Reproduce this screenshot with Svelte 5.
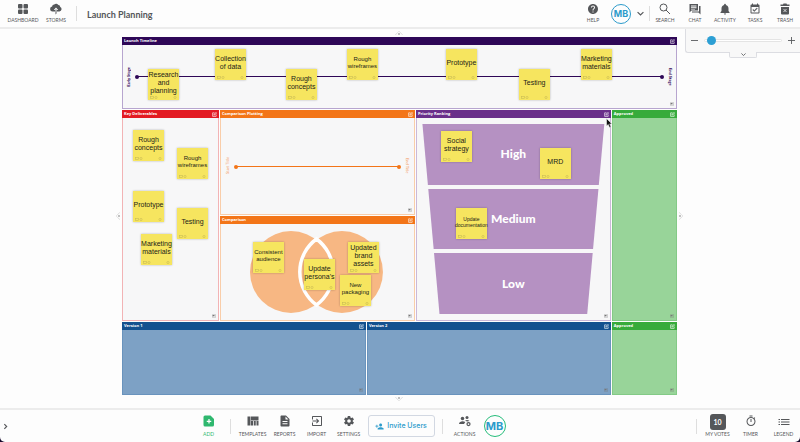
<script>
  const icons = {
    dashboard: '<rect x="2" y="2" width="9" height="9" rx="2"/><rect x="13" y="2" width="9" height="9" rx="2"/><rect x="2" y="13" width="9" height="9" rx="2"/><rect x="13" y="13" width="9" height="9" rx="2"/>',
    storms: '<path d="M10 17H5a5 5 0 0 1-.8-9.9A4.500 4.500 0 0 1 8.500 3a5 5 0 0 1 8.300 1.200A4.200 4.200 0 0 1 20.500 8 4.800 4.800 0 0 1 19 17h-5v-3h2.500L12 9l-4.500 5H10z"/><path d="M11 13h2v8l-2 2z"/>',
    help: '<path d="M12 2C6.480 2 2 6.480 2 12s4.480 10 10 10 10-4.480 10-10S17.520 2 12 2zm1 17h-2v-2h2v2zm2.070-7.750l-.9.92C13.450 12.900 13 13.500 13 15h-2v-.5c0-1.100.45-2.100 1.170-2.830l1.240-1.260c.37-.36.59-.86.59-1.410 0-1.100-.9-2-2-2s-2 .9-2 2H8c0-2.210 1.790-4 4-4s4 1.790 4 4c0 .88-.36 1.680-.93 2.250z"/>',
    search: '<g fill="none" stroke="currentColor" stroke-width="2"><circle cx="9" cy="9" r="7"/><path d="M14 14l8 8"/></g>',
    chat: '<path d="M1 2h17v13H5l-4 4zM4 5v2h11V5zm0 3.500v2h11v-2zM4 12v1h8v-1z" fill-rule="evenodd"/><path d="M20 6h3v17l-4-4H6v-2h14z"/>',
    activity: '<path d="M12 23c1.300 0 2.200-.9 2.200-2H9.800c0 1.100.9 2 2.200 2zm7-7v-5c0-3.500-1.900-6.100-5.200-6.800V3.500a1.800 1.800 0 0 0-3.600 0v.7C6.900 4.900 5 7.500 5 11v5l-2 2.500V20h18v-1.500z"/>',
    tasks: '<path d="M16.530 11.060L15.470 10l-4.880 4.880-2.120-2.120-1.060 1.060L10.590 17l5.940-5.940z" stroke="currentColor"/><path d="M19 3h-1V1h-2v2H8V1H6v2H5c-1.110 0-2 .9-2 2v14c0 1.100.89 2 2 2h14c1.100 0 2-.9 2-2V5c0-1.100-.9-2-2-2zm0 16H5V8h14v11z"/>',
    trash: '<path d="M3 3h5l1-2h6l1 2h5v3H3z"/><path d="M4 8h16v13a2 2 0 0 1-2 2H6a2 2 0 0 1-2-2z"/><path d="M9 12l6 6M15 12l-6 6" stroke="#fff" stroke-width="1.500"/>',
    add: '<path d="M4 1h11l7 7v12a3 3 0 0 1-3 3H4a3 3 0 0 1-3-3V4a3 3 0 0 1 3-3z"/><path d="M12 8v9M7.500 12.500h9" stroke="#fff" stroke-width="2.500"/>',
    templates: '<path d="M1 3h6v18H1zM8 3h15v8H8zM8 12h4v9H8zM13.500 12h4v9h-4zM19 12h4v9h-4z"/>',
    reports: '<path d="M14 1H5c-1.100 0-2 .9-2 2v18c0 1.100.89 2 2 2h14c1.100 0 2-.9 2-2V8l-7-7zm3 17.500H7v-2h10v2zm0-4.500H7v-2h10v2zm-4-5V3l6 6z"/>',
    import: '<path d="M10.090 15.590L11.500 17l5-5-5-5-1.410 1.410L12.670 11H3v2h9.670l-2.580 2.590zM20 2H4c-1.110 0-2 .9-2 2v5h2V4h16v16H4v-5H2v5c0 1.100.89 2 2 2h16c1.100 0 2-.9 2-2V4c0-1.100-.9-2-2-2z"/>',
    settings: '<path d="M19.430 12.980c.04-.32.07-.64.07-.98s-.03-.66-.07-.98l2.110-1.650c.19-.15.24-.42.12-.64l-2-3.460c-.12-.22-.39-.3-.61-.22l-2.490 1c-.52-.4-1.080-.73-1.690-.98l-.38-2.650C14.460 2.180 14.250 2 14 2h-4c-.25 0-.46.18-.49.42l-.38 2.650c-.61.25-1.170.59-1.690.98l-2.490-1c-.23-.09-.49 0-.61.22l-2 3.460c-.13.22-.07.49.12.64l2.110 1.650c-.04.32-.07.65-.07.98s.03.66.07.98l-2.110 1.650c-.19.15-.24.42-.12.64l2 3.460c.12.22.39.3.61.22l2.490-1c.52.4 1.080.73 1.690.98l.38 2.650c.03.24.24.42.49.42h4c.25 0 .46-.18.49-.42l.38-2.650c.61-.25 1.170-.59 1.690-.98l2.490 1c.23.09.49 0 .61-.22l2-3.460c.12-.22.07-.49-.12-.64l-2.110-1.650zM12 15.500c-1.930 0-3.500-1.570-3.500-3.500s1.570-3.500 3.500-3.500 3.500 1.570 3.500 3.500-1.570 3.500-3.500 3.500z"/>',
    invite: '<path d="M15 12c2.210 0 4-1.790 4-4s-1.790-4-4-4-4 1.790-4 4 1.790 4 4 4zm-9-2V7H4v3H1v2h3v3h2v-3h3v-2H6zm9 4c-2.670 0-8 1.340-8 4v2h16v-2c0-2.660-5.330-4-8-4z"/>',
    actions: '<circle cx="7" cy="7" r="3.500"/><circle cx="16" cy="5" r="3"/><path d="M0 18c0-4 4-5.500 7-5.500 2 0 4 .5 5.500 1.500L10 18zM12 11c3-2 7-1.500 9 1l-5 1z"/><circle cx="19" cy="18" r="3" fill="none" stroke="currentColor" stroke-width="2.500"/>',
    timer: '<path d="M15 1H9v2h6V1zm-4 13h2V8h-2v6zm8.030-6.610l1.420-1.420c-.43-.51-.9-.99-1.410-1.410l-1.420 1.420C16.070 4.740 14.120 4 12 4c-4.970 0-9 4.030-9 9s4.020 9 9 9 9-4.030 9-9c0-2.120-.74-4.070-1.970-5.610zM12 20c-3.870 0-7-3.130-7-7s3.130-7 7-7 7 3.130 7 7-3.130 7-7 7z"/>',
    legend: '<path d="M1 8h3v2H1zM6 8h17v2H6zM1 13h3v2H1zM6 13h17v2H6zM1 18h3v2H1zM6 18h17v2H6z"/>',
    edit: '<path d="M12 4H3v17h17v-9M9 15l1-4 9-9 3 3-9 9z" fill="none" stroke="currentColor" stroke-width="3"/>',
    corner: '<path d="M2 4h20v16H2z" fill="none" stroke="currentColor" stroke-width="2"/><path d="M4 6h11v8H4z"/>',
    down: '<path d="M2 7l10 10L22 7" fill="none" stroke="currentColor" stroke-width="4"/>',
    right: '<path d="M8 4l8 8-8 8" fill="none" stroke="currentColor" stroke-width="4"/>',
    grow: '<path d="M1 18L12 6l11 12" fill="none" stroke="#bbb" stroke-width="2" stroke-dasharray="3 2"/><circle cx="12" cy="15" r="2.500" fill="#777"/>'
  };

  const rightTools = [['search', 'SEARCH'], ['chat', 'CHAT'], ['activity', 'ACTIVITY'], ['tasks', 'TASKS'], ['trash', 'TRASH']];
  const boardTools = [['templates', 'TEMPLATES'], ['reports', 'REPORTS'], ['import', 'IMPORT'], ['settings', 'SETTINGS']];

  // Each note: x and y inside its panel body, text size, lines of text.
  const notes = {
    timeline: [
      [25, 24, 7, ['Research', 'and', 'planning']],
      [92, 4, 7, ['Collection', 'of data']],
      [163, 24, 7, ['Rough', 'concepts']],
      [224, 4, 6, ['Rough', 'wireframes']],
      [323, 4, 7, ['Prototype']],
      [396, 24, 7, ['Testing']],
      [458, 4, 7, ['Marketing', 'materials']]
    ],
    deliverables: [
      [10, 12, 7, ['Rough', 'concepts']],
      [54, 30, 6, ['Rough', 'wireframes']],
      [10, 73, 7, ['Prototype']],
      [54, 90, 7, ['Testing']],
      [18, 116, 7, ['Marketing', 'materials']]
    ],
    comparison: [
      [32, 18, 6, ['Consistent', 'audience']],
      [83, 35, 7, ['Update', "persona's"]],
      [127, 18, 7, ['Updated', 'brand', 'assets']],
      [119, 51, 6, ['New', 'packaging']]
    ],
    priority: [
      [24, 13, 7, ['Social', 'strategy']],
      [123, 30, 7, ['MRD']],
      [39, 90, 5, ['Update', 'documentation']]
    ],
    none: []
  };

  let zoom = $state(3);
</script>

{#snippet icon(name, cls = '')}
  <svg class="icon {cls}" viewBox="0 0 24 24" fill="currentColor" aria-hidden="true">{@html icons[name]}</svg>
{/snippet}

{#snippet tool(name, label, cls = '')}
  <button class="tool {cls}" type="button">{@render icon(name)}<span>{label}</span></button>
{/snippet}

{#snippet panel(title, cls, list, width, height, inner)}
  <section class="panel {cls}">
    <header><h2>{title}</h2><button class="edit" type="button" aria-label="Edit section">{@render icon('edit')}</button></header>
    <div class="body">
      {#if inner}{@render inner()}{/if}
      {#each list as [x, y, size, lines]}
        <article class="note s{size}" style="left:{(x / width) * 100}%;top:{(y / height) * 100}%">
          <p>{#each lines as line}<span>{line}</span>{/each}</p>
          <svg class="marks" viewBox="0 0 27 3" fill="none" stroke="currentColor" stroke-width="0.6" aria-hidden="true">
            <rect x="0.5" y="0.5" width="3" height="2" /><circle cx="6" cy="1.5" r="1.100" /><circle cx="25" cy="1.5" r="1.100" />
          </svg>
        </article>
      {/each}
      {@render icon('corner', 'corner')}
    </div>
  </section>
{/snippet}

{#snippet timelineAxis()}
  <div class="axis"><span class="up">Early Stage</span><i></i><span>End Stage</span></div>
{/snippet}

{#snippet plotAxis()}
  <div class="axis plot"><span class="up">Start Title</span><i></i><span>End Title</span></div>
{/snippet}

{#snippet venn()}
  <svg class="venn" viewBox="0 0 193 96" aria-hidden="true">
    <circle cx="70" cy="48" r="41" fill="#f7b783" /><circle cx="121" cy="48" r="41" fill="#f7b783" />
    <path d="M95.500 15a41 41 0 0 1 0 66a41 41 0 0 1 0-66z" fill="#f7b783" stroke="#fff" stroke-width="3.500" />
  </svg>
{/snippet}

{#snippet funnel()}
  <div class="funnel"><div>High</div><div>Medium</div><div>Low</div></div>
{/snippet}

<div class="app">
  <header class="topbar">
    <nav class="left">
      {@render tool('dashboard', 'DASHBOARD', 'wide')}
      {@render tool('storms', 'STORMS', 'narrow')}
    </nav>
    <span class="rule"></span>
    <h1>Launch Planning</h1>
    {@render tool('help', 'HELP', 'push')}
    <button class="avatar" type="button">MB</button>
    <button class="bare" type="button" aria-label="Account menu">{@render icon('down', 'chev')}</button>
    <span class="rule"></span>
    <nav>{#each rightTools as [name, label]}{@render tool(name, label)}{/each}</nav>
  </header>

  <main>
    <div class="board">
      {@render panel('Launch Timeline', 'violet', notes.timeline, 553, 63, timelineAxis)}
      <div class="middle">
        {@render panel('Key Deliverables', 'red', notes.deliverables, 95, 202, null)}
        <div class="stack">
          {@render panel('Comparison Plotting', 'orange', notes.none, 193, 96, plotAxis)}
          {@render panel('Comparison', 'orange', notes.comparison, 193, 96, venn)}
        </div>
        {@render panel('Priority Ranking', 'purple', notes.priority, 193, 202, funnel)}
        {@render panel('Approved', 'green', notes.none, 63, 202, null)}
      </div>
      <div class="bottom">
        {@render panel('Version 1', 'blue', notes.none, 242, 64, null)}
        {@render panel('Version 2', 'blue', notes.none, 242, 64, null)}
        {@render panel('Approved', 'green', notes.none, 63, 64, null)}
      </div>
      <button class="grow n" type="button" aria-label="Extend up">{@render icon('grow')}</button>
      <button class="grow e" type="button" aria-label="Extend right">{@render icon('grow')}</button>
      <button class="grow s" type="button" aria-label="Extend down">{@render icon('grow')}</button>
      <button class="grow w" type="button" aria-label="Extend left">{@render icon('grow')}</button>
      <svg class="pointer" viewBox="0 0 12 20" aria-hidden="true"><path d="M1 1v15l3.500-3.200L7 19l3-1.200-2.600-6H12z" fill="#111" stroke="#fff" /></svg>
    </div>

    <div class="zoom">
      <button class="bare" type="button" aria-label="Zoom out"><svg class="sign" viewBox="0 0 8 8"><path d="M0 4h8" stroke="currentColor" /></svg></button>
      <input type="range" min="0" max="100" bind:value={zoom} aria-label="Zoom" />
      <button class="bare" type="button" aria-label="Zoom in"><svg class="sign" viewBox="0 0 8 8"><path d="M0 4h8M4 0v8" stroke="currentColor" /></svg></button>
      <button class="tab" type="button" aria-label="Expand zoom panel">{@render icon('down')}</button>
    </div>
  </main>

  <footer>
    <button class="bare more" type="button" aria-label="Open side panel">{@render icon('right', 'chev')}</button>
    <div class="tools">
      {@render tool('add', 'ADD', 'accent')}
      <span class="rule"></span>
      {#each boardTools as [name, label]}{@render tool(name, label)}{/each}
      <button class="invite" type="button">{@render icon('invite')}Invite Users</button>
      <span class="rule"></span>
      {@render tool('actions', 'ACTIONS')}
      <button class="avatar big" type="button">MB</button>
    </div>
    <span class="rule end"></span>
    <button class="tool" type="button"><b class="votes">10</b><span>MY VOTES</span></button>
    {@render tool('timer', 'TIMER')}
    {@render tool('legend', 'LEGEND')}
  </footer>
</div>

<style>
  :global(body) { background: #170a2c; }
  * { box-sizing: border-box; }
  h1, h2, p { margin: 0; }
  button { margin: 0; padding: 0; border: 0; background: none; color: inherit; font: inherit; cursor: pointer; }
  .app { display: flex; flex-direction: column; min-height: 100vh; background: #fdfdfd; color: #55575a; font-family: Lato, "Open Sans", sans-serif; border-radius: 0 0 5px 5px; overflow: hidden; }
  .icon { display: block; width: 12px; height: 12px; }

  .topbar { display: flex; align-items: center; height: 29px; border-bottom: 2px solid #ececec; }
  nav { display: flex; }
  .left { padding-left: 8px; gap: 8px; }
  .tool { display: flex; flex-direction: column; align-items: center; width: 30px; flex: none; gap: 1px; font-size: 5px; line-height: 8px; white-space: nowrap; }
  .tool span { display: block; }
  .wide { width: 30px; }
  .narrow { width: 20px; }
  .push { margin-left: auto; }
  .rule { width: 1px; height: 15px; background: #dedede; flex: none; }
  .left + .rule { margin: 0 10px; }
  h1 { font-size: 9px; line-height: 12px; font-weight: 700; padding-top: 3px; }
  .avatar { width: 20px; height: 20px; margin-left: 3px; border: 1px solid #2c9bcb; border-radius: 50%; color: #2c9bcb; font-family: Inter, sans-serif; font-size: 9px; line-height: 10px; font-weight: 700; text-align: center; flex: none; }
  .bare { display: grid; place-items: center; }
  .chev { width: 7px; height: 7px; }
  .topbar .bare { margin: 0 5px 0 6px; }

  main { position: relative; flex: 1; display: flex; padding: 8px 15.4% 13px 15.25%; }
  .board { position: relative; flex: 1; display: grid; grid-template-rows: 72fr 211fr 73fr; gap: 1px; }
  .middle { display: grid; grid-template-columns: 97fr 195fr 195fr 65fr; gap: 1px; }
  .stack { display: grid; grid-template-rows: 1fr 1fr; gap: 1px; }
  .bottom { display: grid; grid-template-columns: 244fr 244fr 65fr; gap: 1px; }

  .panel { --main: #2e0757; --edge: #b7a5cf; --fill: #f7f7f8; display: flex; flex-direction: column; min-width: 0; background: var(--main); }
  .red { --main: #e31b23; --edge: #f2b3b5; }
  .orange { --main: #f37518; --edge: #f9cda9; }
  .purple { --main: #6a2f8a; --edge: #cbb8d8; }
  .green { --main: #37ab3b; --edge: #83ca86; --fill: #98d499; }
  .blue { --main: #13518f; --edge: #6993bd; --fill: #7da1c5; }
  .panel header { display: flex; align-items: center; justify-content: space-between; height: 8px; padding: 0 2px; color: #fff; }
  h2 { font-family: "Open Sans", sans-serif; font-size: 4px; line-height: 8px; font-weight: 700; }
  .edit .icon { width: 5px; height: 5px; }
  .body { position: relative; flex: 1; border: 1px solid var(--edge); border-top: 0; background: var(--fill); }
  .corner { position: absolute; right: 2px; bottom: 2px; width: 4px; height: 4px; color: #777; }

  .note { position: absolute; display: flex; flex-direction: column; width: 31px; height: 31px; background: #f6e55f; box-shadow: 0 0 2px #0004; color: #222218; font-family: "Liberation Sans", Arial, sans-serif; text-align: center; }
  .note p { flex: 1; display: flex; flex-direction: column; align-items: center; justify-content: center; white-space: nowrap; }
  .marks { width: 27px; height: 3px; margin: 0 2px 1px; color: #c9bb55; }
  .s7 { font-size: 7px; line-height: 8px; }
  .s6 { font-size: 6px; line-height: 7px; }
  .s5 { font-size: 5px; line-height: 6px; }

  .axis { display: flex; align-items: center; height: 100%; padding: 0 3px; color: var(--main); font-size: 4px; line-height: 6px; font-weight: 900; }
  .axis span { writing-mode: vertical-rl; }
  .axis .up { transform: rotate(180deg); }
  .axis i { position: relative; flex: 1; height: 1px; margin: 0 4px; background: var(--main); }
  .axis i::before, .axis i::after { content: ""; position: absolute; top: -1px; width: 4px; height: 4px; border-radius: 50%; background: var(--main); }
  .axis i::before { left: -1px; }
  .axis i::after { right: -1px; }
  .plot { padding: 0 4px; font-weight: 400; }
  .plot span { opacity: 0.7; }

  .venn { position: absolute; inset: 0; width: 100%; height: 100%; }
  .funnel { display: flex; flex-direction: column; gap: 4px; height: 100%; padding: 6px 5px; color: #fff; font-size: 12px; line-height: 14px; font-weight: 900; clip-path: polygon(5px 0, calc(100% - 5px) 0, 88% 100%, 12% 100%); }
  .funnel div { flex: 1; display: grid; place-items: center; background: #b591c2; }

  .grow { position: absolute; }
  .grow .icon { width: 8px; height: 8px; }
  .n { left: 50%; top: -8px; margin-left: -4px; }
  .s { left: 50%; bottom: -8px; margin-left: -4px; transform: rotate(180deg); }
  .e { top: 50%; right: -8px; margin-top: -4px; transform: rotate(90deg); }
  .w { top: 50%; left: -8px; margin-top: -4px; transform: rotate(-90deg); }
  .pointer { position: absolute; left: 87.2%; top: 22.5%; width: 6px; height: 10px; }

  .zoom { position: absolute; top: 0; right: 0; display: flex; align-items: center; gap: 6px; width: 115px; height: 24px; padding: 0 5px; background: #f8f8f8; border: 1px solid #dcdde2; border-width: 0 0 1px 1px; border-radius: 0 0 0 3px; }
  .sign { display: block; width: 7px; height: 7px; }
  .zoom input { appearance: none; flex: 1; min-width: 0; height: 9px; margin: 0; background: none; }
  .zoom input::-webkit-slider-runnable-track { height: 3px; border: 1px solid #e4e4e4; border-radius: 2px; background: #fff; }
  .zoom input::-webkit-slider-thumb { appearance: none; width: 9px; height: 9px; margin-top: -4px; border-radius: 50%; background: #2c9fd4; }
  .tab { position: absolute; top: 23px; left: 43px; display: grid; place-items: center; width: 28px; height: 6px; border: 1px solid #dcdde2; border-top: 0; border-radius: 0 0 2px 2px; background: #f8f8f8; }
  .tab .icon { width: 5px; height: 5px; }

  footer { display: flex; align-items: center; height: 34px; border-top: 2px solid #ececec; }
  footer .tool { width: 33px; gap: 3px; }
  .more { width: 11px; }
  .tools { display: flex; align-items: center; margin-left: 22.7%; }
  .tools .tool { width: 32px; }
  .tools .rule { margin: 0 6px 0 5px; }
  .accent { color: #2fb86f; }
  .invite { display: flex; align-items: center; justify-content: center; gap: 3px; width: 67px; height: 22px; margin: 0 2px 0 3px; border: 1px solid #d2d8e2; border-radius: 3px; color: #2c9bcb; font-family: Inter, sans-serif; font-size: 7px; line-height: 10px; font-weight: 500; white-space: nowrap; }
  .invite .icon { width: 9px; height: 9px; }
  .big { width: 22px; height: 22px; border-color: #25bd7b; font-size: 11px; }
  .end { margin-left: auto; margin-right: 4px; }
  footer .tool:has(.votes) { gap: 0; }
  .votes { display: block; width: 16px; height: 16px; border-radius: 3px; background: #55575a; color: #fff; font-size: 7px; line-height: 16px; }
</style>
